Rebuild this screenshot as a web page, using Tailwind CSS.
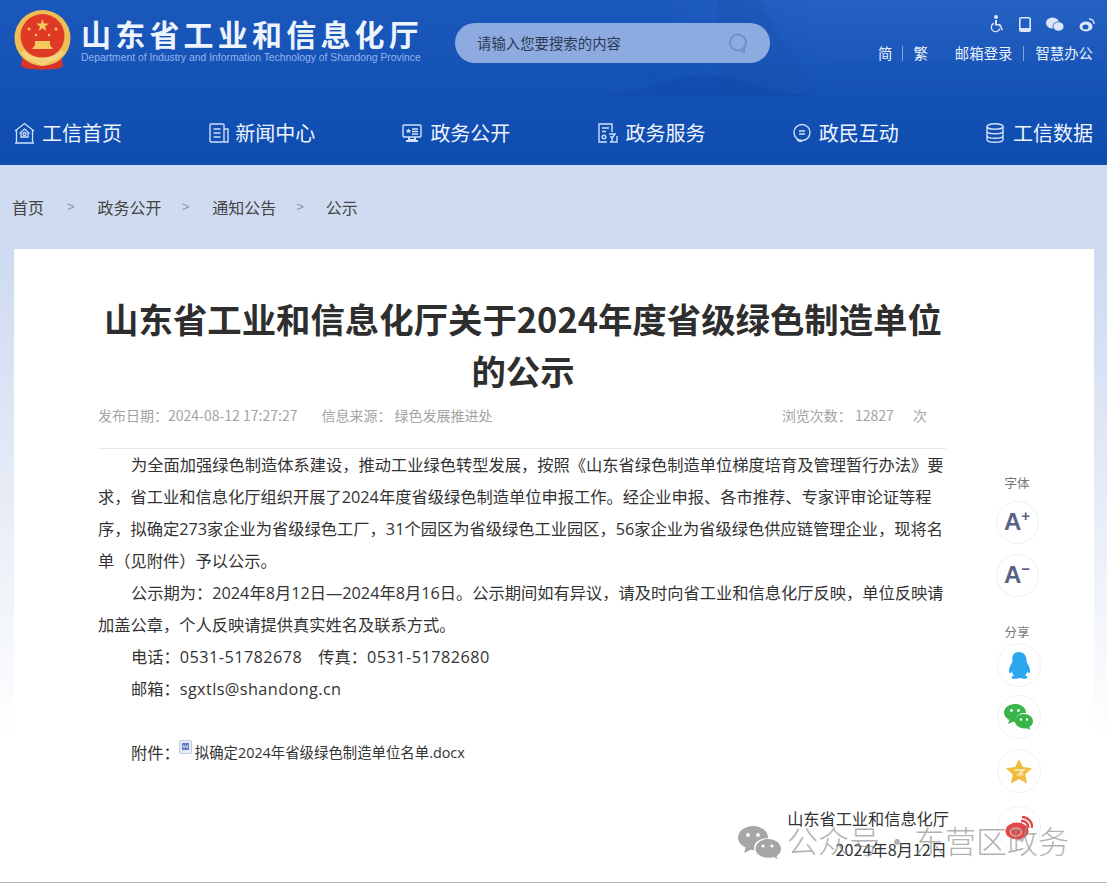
<!DOCTYPE html>
<html lang="zh-CN">
  <head>
    <meta charset="UTF-8" />
    <meta name="viewport" content="width=device-width, initial-scale=1.0" />
    <script src="https://cdn.jsdelivr.net/npm/@tailwindcss/browser@4"></script>
    <title>山东省工业和信息化厅</title>
  </head>
  <body class="h-[885px] w-[1107px] overflow-hidden bg-white font-['Noto_Sans_CJK_SC','Liberation_Sans',sans-serif] text-[#333]">
    <!-- header -->
    <header class="relative h-[165px] overflow-hidden bg-linear-to-b from-[#1b58bc] to-[#0e4cb0] text-white">
      <svg class="absolute inset-0" width="1107" height="165" viewBox="0 0 1107 165">
        <defs>
          <linearGradient id="glow" x1="0" y1="0" x2="0" y2="1">
            <stop offset="0" stop-color="#5a94e6" stop-opacity="0.3" />
            <stop offset="1" stop-color="#5a94e6" stop-opacity="0" />
          </linearGradient>
          <linearGradient id="glowLeft" x1="0" y1="0" x2="1" y2="0">
            <stop offset="0" stop-color="#5a94e6" stop-opacity="0" />
            <stop offset="0.4" stop-color="#5a94e6" stop-opacity="1" />
          </linearGradient>
          <mask id="fadeMask">
            <rect x="640" y="0" width="467" height="100" fill="url(#glowLeft)" />
          </mask>
        </defs>
        <rect x="640" y="0" width="467" height="100" fill="url(#glow)" mask="url(#fadeMask)" />
        <path d="M718 0h42l14 30 30 38 8 28h-94z" fill="#1a50ab" opacity="0.3" />
        <path d="M590 97c40-4 70-12 85-18 24-5 56-4 85 8 20 6 40 8 60 10z" fill="#0e48a8" opacity="0.5" />
      </svg>

      <div class="relative flex h-[100px] items-start pl-[14px]">
        <svg class="mt-[10px] shrink-0" width="57" height="62" viewBox="0 0 57 62">
          <path d="M9 42l-2 14c6 5 13 2 21 4 8-2 15 1 21-4l-2-14z" fill="#d5342b" />
          <circle cx="28.5" cy="28" r="28" fill="#f0bd55" />
          <circle cx="28.5" cy="26" r="22" fill="#df3a25" />
          <path d="M28.5 9l1.500 4.500 4.800.1-3.800 2.900 1.400 4.500-3.900-2.700-3.900 2.700 1.400-4.500-3.800-2.900 4.800-.1z" fill="#f6c75a" />
          <circle cx="15" cy="19" r="1.500" fill="#f6c75a" />
          <circle cx="42" cy="19" r="1.500" fill="#f6c75a" />
          <circle cx="22" cy="25" r="1.300" fill="#f6c75a" />
          <circle cx="35" cy="25" r="1.300" fill="#f6c75a" />
          <path d="M18 39l3-4v-4h15v4l3 4z" fill="#f6c75a" />
          <path d="M10 40c7 10 30 10 37 0l3 3c-6 13-37 13-43 0z" fill="#f6d27a" />
          <path d="M20 52l8-3 8 3-8 4z" fill="#f6d27a" />
        </svg>
        <div class="ml-[10px] mt-[15px] w-[343px]">
          <div class="h-[36px] text-[30px] leading-[36px] font-bold tracking-[4.200px] whitespace-nowrap text-[#eef4fd]">山东省工业和信息化厅</div>
          <div class="mt-[1px] font-['Liberation_Sans',sans-serif] text-[10.350px] leading-[12px] whitespace-nowrap text-[#8fb6ec]">Department of Industry and Information Technology of Shandong Province</div>
        </div>
        <div class="ml-[31px] mt-[23px] flex h-[40px] w-[315px] items-center justify-between rounded-full bg-[#8dabe0] pl-[22px] pr-[21px]">
          <span class="text-[14.400px] text-[#2b3a55]">请输入您要搜索的内容</span>
          <svg width="22" height="22" viewBox="0 0 22 22" fill="none" stroke="#6f90c6" stroke-width="2">
            <circle cx="11" cy="10.500" r="8" />
            <path d="M14 18l3 2v-4" fill="#8dabe0" />
          </svg>
        </div>
        <div class="ml-auto mr-[14px] mt-[14px] flex flex-col items-end">
          <div class="mr-[-2px] flex h-[20px] items-center gap-[15px]">
            <svg width="16" height="18" viewBox="0 0 16 18" fill="#dbe7f9">
              <circle cx="8" cy="2" r="2" />
              <path d="M7 5h2v4h3.500v1.500H7z" />
              <path d="M6 7.500v1.700a3.600 3.600 0 1 0 5 4.300h1.500A5 5 0 1 1 6 7.500z" />
              <path d="M11 10h2l2 5-1.300.5L12 11.500h-1z" />
            </svg>
            <svg width="12" height="15" viewBox="0 0 12 15">
              <rect x="0.800" y="0.800" width="10.400" height="13.400" rx="1.500" fill="none" stroke="#dbe7f9" stroke-width="1.600" />
              <rect x="1" y="11" width="10" height="3" fill="#dbe7f9" />
            </svg>
            <svg width="18" height="15" viewBox="0 0 18 15" fill="#dbe7f9">
              <ellipse cx="6.500" cy="6" rx="6.500" ry="5.500" />
              <ellipse cx="12.500" cy="9.500" rx="5.500" ry="4.700" stroke="#1c5cc0" stroke-width="0.800" />
            </svg>
            <svg width="16" height="15" viewBox="0 0 16 15">
              <ellipse cx="7" cy="9.500" rx="6.500" ry="5" fill="#dbe7f9" />
              <ellipse cx="6.500" cy="10" rx="3" ry="2.500" fill="#1c5cc0" />
              <path d="M10 2a4.500 4.500 0 0 1 5 5" fill="none" stroke="#dbe7f9" stroke-width="1.400" />
            </svg>
          </div>
          <div class="mt-[9px] flex h-[20px] items-center text-[14.400px] leading-[20px] text-[#eaf1fb]">
            <span>简</span>
            <span class="mx-[10px] h-[15px] w-px bg-[#7ea4e0]"></span>
            <span>繁</span>
            <span class="ml-[27px]">邮箱登录</span>
            <span class="mx-[11px] h-[15px] w-px bg-[#7ea4e0]"></span>
            <span>智慧办公</span>
          </div>
        </div>
      </div>

      <nav class="relative flex h-[65px] items-center justify-between px-[14px] text-[20px] text-[#eef4fd]">
        <a class="flex items-center gap-[7px]">
          <svg width="21" height="22" viewBox="0 0 21 22" fill="none" stroke="#cfe0f8" stroke-width="1.300">
            <path d="M1 9l9.500-7.500L20 9M2.500 8v13h16V8M1 21h19" />
            <path d="M10.500 7l4.500 4-1 .5V15H7v-3.500l-1-.5z" />
            <circle cx="10.500" cy="12" r="1.500" />
          </svg>
          工信首页
        </a>
        <a class="flex items-center gap-[6px]">
          <svg width="20" height="20" viewBox="0 0 20 20" fill="none" stroke="#cfe0f8" stroke-width="1.400">
            <rect x="1" y="1" width="14" height="18" rx="1" />
            <path d="M15 6h4v13h-4M4.500 6h7M4.500 10h7M4.500 14h7" />
          </svg>
          新闻中心
        </a>
        <a class="flex items-center gap-[8px]">
          <svg width="20" height="20" viewBox="0 0 20 20" fill="none" stroke="#cfe0f8" stroke-width="1.400">
            <rect x="1" y="2" width="18" height="12" rx="1" />
            <path d="M5 6.500l1 1.500 1.700.2-1.200 1.200.3 1.700L5 10.200l-1.700.9.300-1.700-1.200-1.200L4.100 8z" fill="#cfe0f8" stroke="none" transform="translate(1.500 -1)" />
            <path d="M10 6h6M10 8.500h6M10 11h6" />
            <path d="M7 14v3h6v-3M4 18h12" stroke-width="2" />
          </svg>
          政务公开
        </a>
        <a class="flex items-center gap-[8px]">
          <svg width="20" height="20" viewBox="0 0 20 20" fill="none" stroke="#cfe0f8" stroke-width="1.400">
            <path d="M14 9V1H1v18h8" />
            <path d="M4 5h7M4 8.500h4" />
            <path d="M11 11h6l-2 3h-2l1.500 2-1.500 3M19 13v6h-7" />
            <circle cx="6" cy="14" r="1.800" />
          </svg>
          政务服务
        </a>
        <a class="flex items-center gap-[8px]">
          <svg width="18" height="19" viewBox="0 0 18 19" fill="none" stroke="#cfe0f8" stroke-width="1.400">
            <circle cx="9" cy="9.500" r="8" />
            <path d="M6 8h6M6 11h6" />
            <path d="M4 16.500c1 1.500 3 2 5 2" />
          </svg>
          政民互动
        </a>
        <a class="flex items-center gap-[9px]">
          <svg width="18" height="20" viewBox="0 0 18 20" fill="none" stroke="#cfe0f8" stroke-width="1.400">
            <ellipse cx="9" cy="3.500" rx="8" ry="2.800" />
            <path d="M1 3.500v13c0 1.600 3.600 2.800 8 2.800s8-1.200 8-2.800v-13M1 8c0 1.600 3.600 2.800 8 2.800S17 9.600 17 8M1 12.400c0 1.600 3.600 2.800 8 2.800s8-1.200 8-2.800" />
          </svg>
          工信数据
        </a>
      </nav>
    </header>

    <!-- page body -->
    <div class="h-[720px] bg-linear-to-b from-[#cfdbf0] from-[14%] to-white to-[80%] px-[14px]">
      <div class="flex h-[84px] items-center pb-[1px] text-[16px] text-[#444]">
        <a class="-ml-[2px]">首页</a>
        <span class="mx-[23px] font-['Liberation_Sans',sans-serif] text-[13px] text-[#8a93a5]">&gt;</span>
        <a>政务公开</a>
        <span class="ml-[20px] mr-[23px] font-['Liberation_Sans',sans-serif] text-[13px] text-[#8a93a5]">&gt;</span>
        <a>通知公告</a>
        <span class="ml-[20px] mr-[22px] font-['Liberation_Sans',sans-serif] text-[13px] text-[#8a93a5]">&gt;</span>
        <a>公示</a>
      </div>

      <section class="flex h-[636px] w-[1080px] bg-white pl-[84px]">
        <article class="w-[850px] shrink-0 pt-[43px]">
          <h1 class="whitespace-nowrap text-center text-[34.400px] leading-[52px] font-bold text-[#2e2e2e]">山东省工业和信息化厅关于2024年度省级绿色制造单位<br />的公示</h1>
          <div class="mt-[9px] flex h-[20px] items-center text-[14px] leading-[20px] text-[#a3a3a3]">
            <span>发布日期：2024-08-12 17:27:27</span>
            <span class="ml-[24px]">信息来源：&nbsp;绿色发展推进处</span>
            <span class="ml-auto mr-[21px]">浏览次数：&nbsp;12827 <span class="ml-[16px]">次</span></span>
          </div>
          <div class="mt-[23px] h-px w-[848px] bg-[#e9e9e9]"></div>
          <div class="font-['Open_Sans','Noto_Sans_CJK_SC',sans-serif] text-[16.250px] leading-[32px] text-[#333]">
            <p class="indent-[33px]">为全面加强绿色制造体系建设，推动工业绿色转型发展，按照《山东省绿色制造单位梯度培育及管理暂行办法》要求，省工业和信息化厅组织开展了2024年度省级绿色制造单位申报工作。经企业申报、各市推荐、专家评审论证等程序，拟确定273家企业为省级绿色工厂，31个园区为省级绿色工业园区，56家企业为省级绿色供应链管理企业，现将名单（见附件）予以公示。</p>
            <p class="indent-[33px]">公示期为：2024年8月12日—2024年8月16日。公示期间如有异议，请及时向省工业和信息化厅反映，单位反映请加盖公章，个人反映请提供真实姓名及联系方式。</p>
            <p class="pl-[33px]">电话：<span class="tracking-[.45px]">0531-51782678</span><span class="ml-[16px]">传真：</span><span class="tracking-[.45px]">0531-51782680</span></p>
            <p class="pl-[33px]">邮箱：<span class="tracking-[.4px]">sgxtls@shandong.cn</span></p>
            <p class="mt-[32px] flex items-center pl-[33px]">
              <span>附件：</span>
              <svg class="mb-[11px] ml-[-1px]" width="14" height="15" viewBox="0 0 14 15">
                <rect x="0.500" y="0.500" width="12" height="13" rx="1.500" fill="#e6ecf6" stroke="#c2cce0" />
                <rect x="3" y="3" width="7" height="7" fill="#5b7fc0" />
                <path d="M4 5l1 3 1.500-2.500L8 8l1-3" fill="none" stroke="#fff" stroke-width="0.700" />
              </svg>
              <a class="ml-[2px] text-[14.400px]">拟确定2024年省级绿色制造单位名单.docx</a>
            </p>
          </div>
          <div class="mr-[-1px] mt-[34px] text-right text-[16.200px] leading-[31px] text-[#333]">
            <p>山东省工业和信息化厅</p>
            <p class="pr-[2px]">2024年8月12日</p>
          </div>
        </article>

        <aside class="ml-[45px] flex w-[48px] flex-col items-center pt-[223px]">
          <div class="text-[12.500px] leading-[22px] text-[#777]">字体</div>
          <div class="mt-[7px] flex size-[43px] items-start justify-center rounded-full border border-[#eeeeee] pt-[5px] font-['Liberation_Sans',sans-serif] text-[24px] leading-[30px] font-bold text-[#5a6285]">A<span class="text-[15px] leading-[18px]">+</span></div>
          <div class="mt-[10px] flex size-[43px] items-start justify-center rounded-full border border-[#eeeeee] pt-[5px] font-['Liberation_Sans',sans-serif] text-[24px] leading-[30px] font-bold text-[#5a6285]">A<span class="text-[15px] leading-[18px]">−</span></div>
          <div class="mt-[24px] text-[12.500px] leading-[22px] text-[#777]">分享</div>
          <div class="ml-[3px] flex flex-col gap-[8px]">
            <div class="flex size-[44px] items-center justify-center rounded-full border border-[#f1f1f1]">
              <svg width="24" height="27" viewBox="0 0 24 27" fill="#2aa7ee">
                <path d="M12 0c5 0 7.500 4 7.500 8.500 0 1 .3 2 1 3.200 2 3 3 6.300 2.300 8.800-.5 1.200-1.600.5-2.600-1-.4 1.600-1.100 3-2.200 4 1.700.6 2.800 1.300 2.500 2.200-.5 1.300-5 1.500-7.500.3-.3-.1-.7-.1-1 0-2.500 1.200-7 1-7.500-.3-.3-.9.800-1.600 2.500-2.200-1.100-1-1.800-2.400-2.200-4-1 1.500-2.100 2.200-2.600 1-.7-2.500.3-5.800 2.300-8.800.7-1.200 1-2.200 1-3.200C4.500 4 7 0 12 0z" />
              </svg>
            </div>
            <div class="flex size-[44px] items-center justify-center rounded-full border border-[#f1f1f1]">
              <svg width="29" height="26" viewBox="0 0 29 26" fill="#39b54a">
                <path d="M11 0c6 0 11 3.800 11 8.500 0 .2 0 .5-.1.700-5.300-.7-10.400 2.800-10.400 7.300 0 .5.100 1 .200 1.500-.9 0-1.800-.1-2.700-.3L4 20l1.300-4C2 14.300 0 11.500 0 8.500 0 3.800 5 0 11 0z" />
                <path d="M20 10c5 0 9 3.200 9 7.300 0 2.500-1.500 4.500-3.700 5.900l1 2.800-3.700-1.800c-.8.200-1.700.3-2.600.3-5 0-9-3.200-9-7.200S15 10 20 10z" />
                <circle cx="7.500" cy="6.500" r="1.400" fill="#fff" />
                <circle cx="14.500" cy="6.500" r="1.400" fill="#fff" />
                <circle cx="17" cy="15.500" r="1.200" fill="#fff" />
                <circle cx="23" cy="15.500" r="1.200" fill="#fff" />
              </svg>
            </div>
            <div class="mt-[2px] flex size-[44px] items-center justify-center rounded-full border border-[#f1f1f1]">
              <svg width="26" height="25" viewBox="0 0 26 25">
                <path d="M13 0l3.800 8 9.200 1.200-6.700 6.200 1.700 9.100-8-4.400-8 4.400 1.700-9.100L0 9.200 9.200 8z" fill="#efbc3d" />
                <path d="M8.500 11h9l-5 4.500h5M8.500 15.500" fill="none" stroke="#f9e6ae" stroke-width="2" />
              </svg>
            </div>
            <div class="mt-[5px] flex size-[44px] items-center justify-center rounded-full border border-[#f1f1f1]">
              <svg width="28" height="24" viewBox="0 0 28 24">
                <ellipse cx="12" cy="15" rx="11.500" ry="8.500" fill="#e2474a" />
                <ellipse cx="11" cy="16" rx="5.500" ry="4" fill="none" stroke="#f7c9ca" stroke-width="1.200" />
                <path d="M16 5a6 6 0 0 1 7 7M17 1a10 10 0 0 1 10 11" fill="none" stroke="#e2474a" stroke-width="2.500" />
              </svg>
            </div>
          </div>
        </aside>
      </section>
    </div>

    <!-- gzh watermark over the page corner -->
    <div class="absolute left-[738px] top-[820px] flex h-[40px] items-center text-[31px] leading-[40px] whitespace-nowrap text-[#8f8f8f]/70">
      <svg class="mr-[6px] mt-[4px]" width="43" height="33" viewBox="0 0 43 33" fill="#a6a6a6">
        <path d="M15 0c8 0 15 5 15 11.500 0 .3 0 .6-.1.900C23 11.500 16 16 16 22c0 .8.100 1.500.300 2.200-1.300 0-2.500-.2-3.700-.5L6 27l1.700-5.400C3 19.300 0 15.700 0 11.500 0 5 7 0 15 0z" />
        <path d="M30 13c7 0 13 4.300 13 9.800 0 3-1.800 5.500-4.500 7.400l1.300 3-4.200-2.300c-1.800.6-3.700.9-5.600.9-7 0-12.500-4-12.500-9s5.500-9.800 12.500-9.800z" />
        <circle cx="10" cy="9" r="1.900" fill="#fff" />
        <circle cx="20" cy="9" r="1.900" fill="#fff" />
        <circle cx="25" cy="20" r="1.600" fill="#fff" />
        <circle cx="34" cy="20" r="1.600" fill="#fff" />
      </svg>
      <span class="font-light">公众号</span>
      <span class="w-[34px] text-center font-light">·</span>
      <span class="font-light">东营区政务</span>
    </div>
    <div class="absolute left-0 top-[882px] h-px w-[1107px] bg-[#b5b5b5]"></div>
  </body>
</html>
